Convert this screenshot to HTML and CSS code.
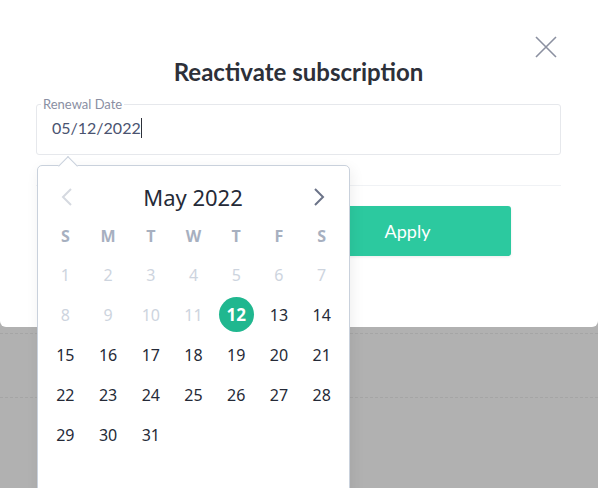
FILE: index.html
```html
<!DOCTYPE html>
<html lang="en">
<head>
  <meta charset="UTF-8">
  <title>Reactivate subscription</title>
  <meta name="viewport" content="width=device-width, initial-scale=1.0">
  <link rel="stylesheet" href="styles.css">
</head>
<body>

<!-- MODAL -->
<div class="modal">
  <button class="close" aria-label="Close">
    <svg width="22" height="22" viewBox="0 0 22 22">
      <path d="M1 1 L21 21 M21 1 L1 21" stroke="#8b90a0" stroke-width="1.6" fill="none"/>
    </svg>
  </button>

  <h2 class="title">Reactivate subscription</h2>

  <div class="field-wrap">
    <fieldset class="field">
      <legend>Renewal Date</legend>
      <div class="value">05/12/2022<span class="cursor"></span></div>
    </fieldset>

    <!-- DATE PICKER -->
    <div class="picker">
      <div class="picker-head">
        <span class="nav disabled">
          <svg width="12" height="18" viewBox="0 0 12 18"><path d="M10 1 L2 9 L10 17" stroke="currentColor" stroke-width="2" fill="none"/></svg>
        </span>
        <span class="month">May 2022</span>
        <span class="nav">
          <svg width="12" height="18" viewBox="0 0 12 18"><path d="M2 1 L10 9 L2 17" stroke="currentColor" stroke-width="2" fill="none"/></svg>
        </span>
      </div>
      <div class="weekdays">
        <span>S</span><span>M</span><span>T</span><span>W</span><span>T</span><span>F</span><span>S</span>
      </div>
      <div class="days">
        <span class="off">1</span><span class="off">2</span><span class="off">3</span><span class="off">4</span><span class="off">5</span><span class="off">6</span><span class="off">7</span>
        <span class="off">8</span><span class="off">9</span><span class="off">10</span><span class="off">11</span><span class="sel">12</span><span>13</span><span>14</span>
        <span>15</span><span>16</span><span>17</span><span>18</span><span>19</span><span>20</span><span>21</span>
        <span>22</span><span>23</span><span>24</span><span>25</span><span>26</span><span>27</span><span>28</span>
        <span>29</span><span>30</span><span>31</span>
      </div>
    </div>
  </div>

  <div class="actions">
    <button class="btn cancel">Cancel</button>
    <button class="btn apply">Apply</button>
  </div>
</div>

<!-- PAGE BEHIND -->
<div class="backdrop">
  <div class="row"></div>
  <div class="row"></div>
</div>

</body>
</html>
```

FILE: styles.css
```css
* { margin: 0; padding: 0; box-sizing: border-box; }
body {
  font-family: Lato, "Noto Sans", sans-serif;
  background-color: #b1b1b1;
  height: 488px;
  overflow: hidden;
}

.modal {
  position: relative;
  background: #fff;
  height: 327px;
  border-radius: 0 0 6px 6px;
  padding: 58px 37px 0 36px;
  z-index: 2;
}

.close {
  position: absolute;
  top: 36px;
  left: 535px;
  width: 22px;
  height: 22px;
  border: none;
  background: none;
  display: flex;
}

.title {
  text-align: center;
  font-size: 24px;
  font-weight: 700;
  color: #2d3039;
  line-height: 30px;
  margin-top: -1px;
  margin-bottom: 11px;
}

.field-wrap { position: relative; }

.field {
  border: 1px solid #e6e8ec;
  border-radius: 3px;
  height: 57px;
  padding: 0 15px;
}
.field legend {
  font-size: 13px;
  color: #8a8fa3;
  padding: 0 2px;
  margin-left: -11px;
  line-height: 13px;
}
.value {
  font-size: 16px;
  color: #4a5370;
  line-height: 24px;
  margin-top: 5px;
  display: flex;
  align-items: center;
}
.cursor {
  display: inline-block;
  width: 1px;
  height: 20px;
  background: #2d3039;
}

.picker {
  position: absolute;
  top: 67px;
  left: 1px;
  width: 313px;
  height: 380px;
  background: #fff;
  border: 1px solid #c9d1dc;
  border-radius: 5px;
  box-shadow: 2px 4px 14px rgba(0, 0, 0, 0.07);
  padding: 18px 6px 0;
  z-index: 3;
}
.picker::before {
  content: "";
  position: absolute;
  top: -7.5px;
  left: 22.5px;
  width: 13px;
  height: 13px;
  background: #fff;
  border-top: 1px solid #c9d1dc;
  border-left: 1px solid #c9d1dc;
  transform: rotate(45deg);
}

.picker-head {
  display: flex;
  justify-content: space-between;
  align-items: center;
  height: 26px;
  padding: 0 18px 0 17px;
}
.month {
  font-size: 22px;
  color: #252a37;
  font-family: "Noto Sans", sans-serif;
}
.nav { display: flex; color: #6b7388; }
.nav.disabled { color: #d5d9e0; }

.weekdays, .days {
  display: grid;
  grid-template-columns: repeat(7, 1fr);
  text-align: center;
}
.weekdays {
  margin-top: 11px;
  margin-bottom: 4px;
  height: 30px;
  line-height: 30px;
  font-size: 16px;
  font-weight: 700;
  color: #a7b0c0;
  font-family: "Open Sans", sans-serif;
}
.days span {
  height: 40px;
  line-height: 40px;
  font-size: 16px;
  color: #252a37;
  font-family: "Noto Sans", sans-serif;
}
.days .off { color: #cdd4de; }
.days .sel {
  width: 35px;
  height: 35px;
  line-height: 35px;
  margin: 2px auto 0;
  border-radius: 50%;
  background: #20b78f;
  color: #fff;
  font-weight: 700;
  font-size: 17px;
  font-family: "Open Sans", sans-serif;
}

.actions {
  border-top: 1px solid #f0f2f5;
  margin-top: 30px;
  padding-top: 20px;
  display: flex;
  justify-content: center;
  gap: 12px;
}
.btn {
  width: 206px;
  height: 50px;
  border: none;
  border-radius: 3px;
  font-size: 18px;
  font-family: Lato, "Noto Sans", sans-serif;
  cursor: pointer;
}
.cancel { background: #fff; color: #4a5370; border: 1px solid #e6e8ec; }
.apply {
  background: #2cc99f;
  color: #fff;
  box-shadow: 0 1px 3px rgba(0, 0, 0, 0.08);
}

.backdrop { padding-top: 6px; }
.backdrop .row {
  height: 64px;
  border-top: 1px dashed #a5a5a5;
}
```
